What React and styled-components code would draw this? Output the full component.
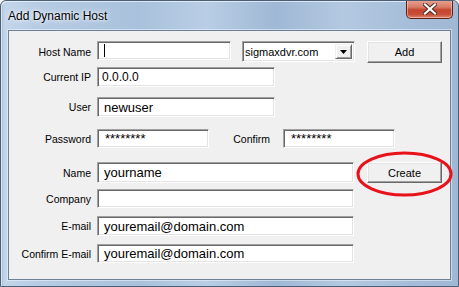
import styled, { createGlobalStyle } from "styled-components";

const Global = createGlobalStyle`
  html, body {
    margin: 0;
    padding: 0;
    background: #ffffff;
  }
`;

const Window = styled.div`
  width: 459px;
  height: 287px;
  box-sizing: border-box;
  display: flex;
  flex-direction: column;
  border: 1px solid #4b5f76;
  border-radius: 6px 6px 0 0;
  background: linear-gradient(
    90deg,
    #9fb7d2 0px,
    #c2d5ea 3px,
    #b7cce4 8%,
    #a9c1dc 30%,
    #b9cee5 45%,
    #9fb8d5 60%,
    #b4c9e1 75%,
    #a5bdd9 90%,
    #a0b8d4 100%
  );
  box-shadow: inset 1px 1px 0 rgba(255, 255, 255, 0.6);
  overflow: hidden;
`;

const TitleBar = styled.div`
  height: 29px;
  display: flex;
  align-items: flex-start;
  justify-content: space-between;
  padding-left: 7px;
  box-sizing: border-box;
`;

const Title = styled.div`
  font-family: "Liberation Sans", Arial, sans-serif;
  font-size: 12px;
  color: #000;
  margin-top: 8px;
  text-shadow: 0 0 6px #ffffff, 0 0 3px #ffffff;
`;

const CloseBtn = styled.div`
  width: 47px;
  height: 19px;
  margin-right: 5px;
  margin-top: -1px;
  box-sizing: border-box;
  border: 1px solid #5b2016;
  border-top: none;
  border-radius: 0 0 5px 5px;
  background: linear-gradient(
    180deg,
    #e9a594 0%,
    #d97a65 40%,
    #c4452e 55%,
    #c84e36 80%,
    #dc8a70 100%
  );
  box-shadow: inset 0 0 0 1px rgba(255, 210, 200, 0.55);
  display: flex;
  align-items: center;
  justify-content: center;
`;

const Client = styled.div`
  flex: 1;
  margin: 0 7px 6px 7px;
  background: #f0f0f0;
  border: 1px solid #6d819a;
  box-shadow: 0 0 0 1px rgba(255, 255, 255, 0.45);
  display: flex;
  flex-direction: column;
  padding-top: 10px;
`;

const Row = styled.div`
  display: flex;
  align-items: ${(p) => p.$align || "center"};
  margin-top: ${(p) => p.$mt || 0}px;
`;

const Label = styled.div`
  width: ${(p) => p.$w || 82}px;
  margin-right: ${(p) => (p.$gap === undefined ? 6 : p.$gap)}px;
  margin-left: ${(p) => p.$ml || 0}px;
  text-align: right;
  font-family: "Liberation Sans", Arial, sans-serif;
  font-size: 10.5px;
  color: #000;
  white-space: nowrap;
  align-self: center;
`;

const Field = styled.div`
  width: ${(p) => p.$w}px;
  height: ${(p) => p.$h || 20}px;
  box-sizing: border-box;
  background: #ffffff;
  border-style: solid;
  border-width: 1px;
  border-color: #a0a0a0 #ffffff #ffffff #a0a0a0;
  box-shadow: inset 1px 1px 0 #696969, inset -1px -1px 0 #e3e3e3;
  display: flex;
  align-items: center;
  padding-left: ${(p) => p.$pl || 6}px;
  font-family: "Liberation Sans", Arial, sans-serif;
  font-size: ${(p) => p.$fs || 13}px;
  color: #000;
  white-space: nowrap;
  overflow: hidden;
`;

const Caret = styled.span`
  display: block;
  width: 1px;
  height: 13px;
  background: #000;
  margin-left: 0px;
`;

const Select = styled.div`
  width: 113px;
  height: 21px;
  margin-left: 11px;
  box-sizing: border-box;
  background: #ffffff;
  border-style: solid;
  border-width: 1px;
  border-color: #a0a0a0 #ffffff #ffffff #a0a0a0;
  box-shadow: inset 1px 1px 0 #696969, inset -1px -1px 0 #e3e3e3;
  display: flex;
  align-items: stretch;
  justify-content: space-between;
  padding: 2px 2px 2px 2px;
  font-family: "Liberation Sans", Arial, sans-serif;
  font-size: 11px;
  color: #000;
`;

const SelectText = styled.span`
  display: flex;
  align-items: center;
`;

const ArrowBtn = styled.div`
  width: 17px;
  box-sizing: border-box;
  background: #f0f0f0;
  border-style: solid;
  border-width: 1px;
  border-color: #f0f0f0 #696969 #696969 #f0f0f0;
  box-shadow: inset 1px 1px 0 #ffffff, inset -1px -1px 0 #a0a0a0;
  display: flex;
  align-items: center;
  justify-content: center;
`;

const Button = styled.div`
  width: 75px;
  height: ${(p) => p.$h || 22}px;
  margin-left: ${(p) => p.$ml || 0}px;
  box-sizing: border-box;
  background: #f0f0f0;
  border-style: solid;
  border-width: 1px;
  border-color: #ffffff #696969 #696969 #ffffff;
  box-shadow: inset -1px -1px 0 #a0a0a0, inset 1px 1px 0 #e3e3e3;
  display: flex;
  align-items: center;
  justify-content: center;
  font-family: "Liberation Sans", Arial, sans-serif;
  font-size: 11px;
  color: #000;
`;

const Marked = styled.div`
  position: relative;
  margin-left: 13px;
`;

const Ring = styled.svg`
  position: absolute;
  left: -11px;
  top: -11px;
  pointer-events: none;
`;

const Stars = () => <span style={{ letterSpacing: "0px" }}>********</span>;

export default function App() {
  return (
    <>
      <Global />
      <Window>
        <TitleBar>
          <Title>Add Dynamic Host</Title>
          <CloseBtn>
            <svg width="14" height="12" viewBox="0 0 14 12">
              <path
                d="M2 1.5 L12 10.5 M12 1.5 L2 10.5"
                stroke="#4a2a24"
                strokeWidth="4"
                strokeLinecap="square"
              />
              <path
                d="M2 1.5 L12 10.5 M12 1.5 L2 10.5"
                stroke="#ffffff"
                strokeWidth="2.2"
                strokeLinecap="square"
              />
            </svg>
          </CloseBtn>
        </TitleBar>
        <Client>
          <Row $align="flex-start">
            <Label>Host Name</Label>
            <Field $w={134} $h={19}>
              <Caret />
            </Field>
            <Select>
              <SelectText>sigmaxdvr.com</SelectText>
              <ArrowBtn>
                <svg width="7" height="4" viewBox="0 0 7 4">
                  <path d="M0 0 H7 L3.5 4 Z" fill="#000" />
                </svg>
              </ArrowBtn>
            </Select>
            <Button $ml={12}>Add</Button>
          </Row>
          <Row $mt={4}>
            <Label>Current IP</Label>
            <Field $w={178} $fs={12} $pl={4}>
              0.0.0.0
            </Field>
          </Row>
          <Row $mt={10}>
            <Label>User</Label>
            <Field $w={178}>newuser</Field>
          </Row>
          <Row $mt={12}>
            <Label>Password</Label>
            <Field $w={112} $h={19} $pl={7}>
              <Stars />
            </Field>
            <Label $w={37} $ml={24} $gap={13}>
              Confirm
            </Label>
            <Field $w={112} $h={19} $pl={7}>
              <Stars />
            </Field>
          </Row>
          <Row $mt={14}>
            <Label>Name</Label>
            <Field $w={257} $h={21}>
              yourname
            </Field>
            <Marked>
              <Button $h={21}>Create</Button>
              <Ring width="97" height="46" viewBox="0 0 97 46">
                <ellipse
                  cx="48.5"
                  cy="23"
                  rx="46.5"
                  ry="21"
                  fill="none"
                  stroke="#e8121a"
                  strokeWidth="3"
                />
              </Ring>
            </Marked>
          </Row>
          <Row $mt={6}>
            <Label>Company</Label>
            <Field $w={257} $h={19} />
          </Row>
          <Row $mt={8}>
            <Label>E-mail</Label>
            <Field $w={257}>youremail@domain.com</Field>
          </Row>
          <Row $mt={8}>
            <Label>Confirm E-mail</Label>
            <Field $w={257} $h={19}>
              youremail@domain.com
            </Field>
          </Row>
        </Client>
      </Window>
    </>
  );
}
